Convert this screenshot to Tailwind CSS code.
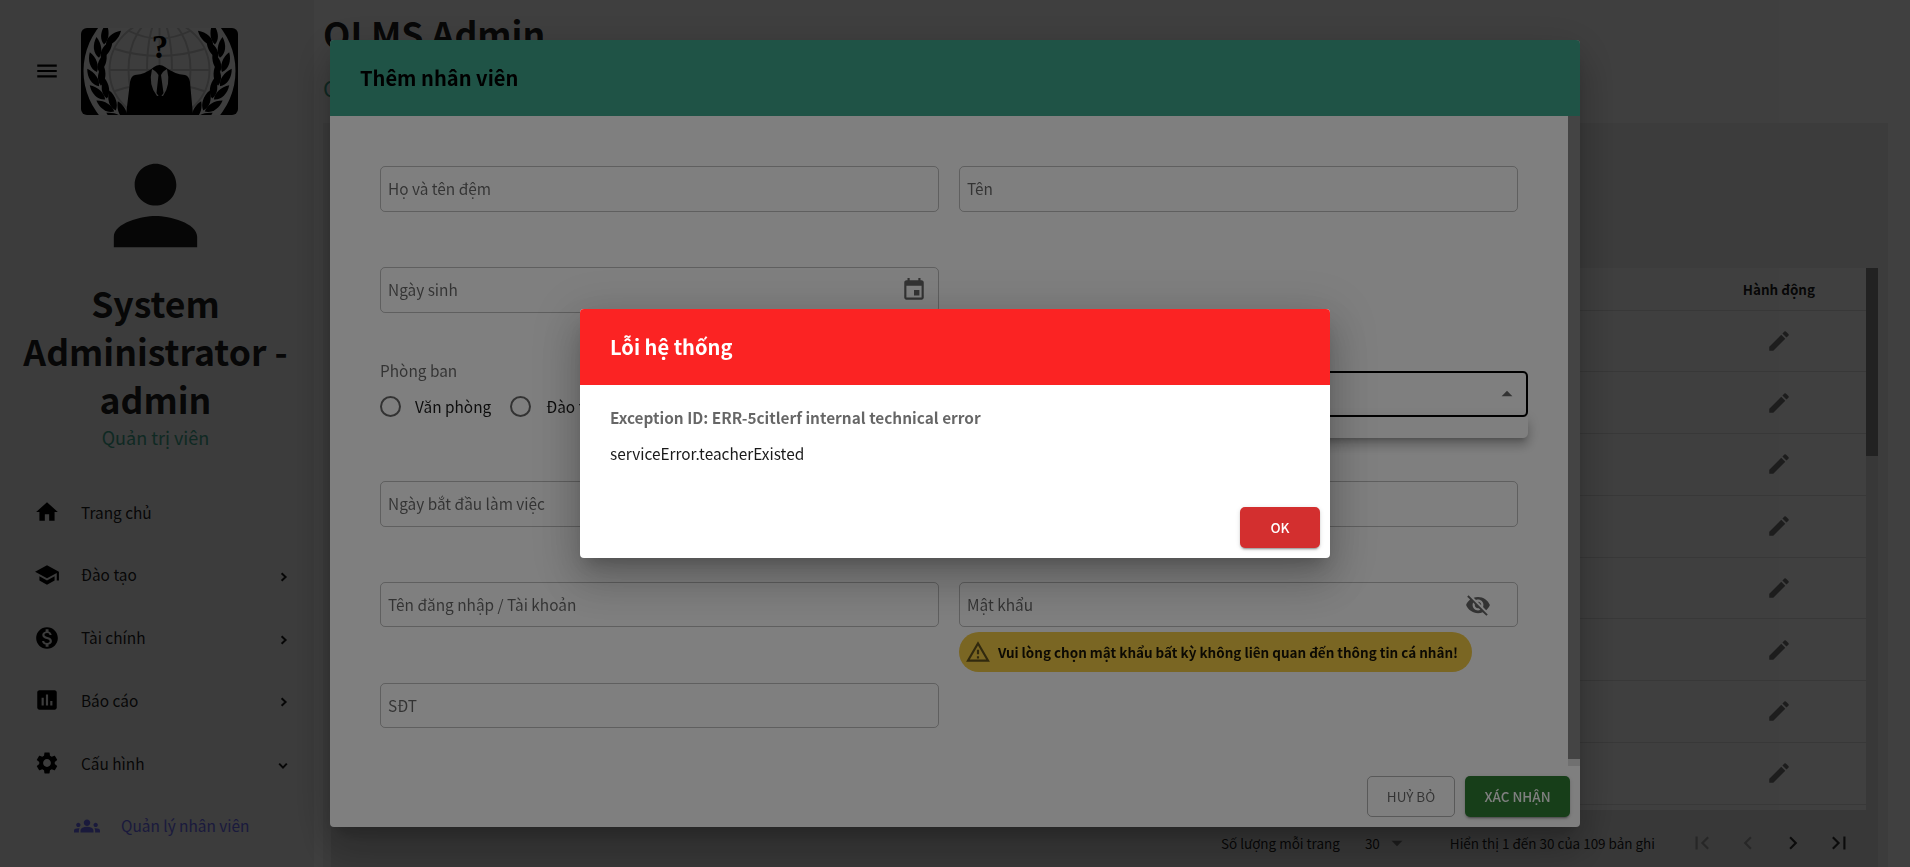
<!DOCTYPE html>
<html lang="vi">
<head>
<meta charset="utf-8">
<title>QLMS Admin</title>
<script src="https://cdn.jsdelivr.net/npm/@tailwindcss/browser@4"></script>
</head>
<body class="h-screen overflow-hidden bg-white font-['Noto_Sans_CJK_JP','Noto_Sans',sans-serif] text-[15.400px] text-black/90">
<svg class="hidden">
  <symbol id="edit" viewBox="0 0 24 24"><path d="M3 17.25V21h3.75L17.81 9.94l-3.75-3.75L3 17.25zM20.71 7.04c.39-.39.39-1.02 0-1.41l-2.34-2.34a.9959.9959 0 0 0-1.41 0l-1.83 1.83 3.75 3.75 1.83-1.83z"/></symbol>
  <symbol id="chev" viewBox="0 0 8 10"><path d="M1.6 1.2 5.6 5 1.6 8.8" fill="none" stroke="currentColor" stroke-width="2"/></symbol>
</svg>

<div class="flex h-full">
  <!-- Sidebar -->
  <aside class="flex h-full w-[314px] shrink-0 flex-col bg-[#f0f0f0]">
    <div class="flex h-[143px] items-center pl-[34px]">
      <svg class="mb-px size-[26px]" viewBox="0 0 24 24"><path d="M3 18h18v-2H3v2zm0-5h18v-2H3v2zm0-7v2h18V6H3z"/></svg>
      <svg class="ml-[21px] h-[87px] w-[157px] rounded-md" viewBox="0 0 157 87">
        <defs>
          <path id="leaf" d="M0 0C-5.500-5-5-14 0-21C4.500-14 4.500-5 0 0z"/>
          <g id="wreath">
            <g transform="translate(45 93) rotate(-45)"><use href="#leaf" transform="translate(-1) rotate(-20)"/><use href="#leaf" transform="translate(1) rotate(20)"/></g>
            <g transform="translate(34 83) rotate(-38)"><use href="#leaf" transform="translate(-1) rotate(-20)"/><use href="#leaf" transform="translate(1) rotate(20)"/></g>
            <g transform="translate(25 71) rotate(-27)"><use href="#leaf" transform="translate(-1) rotate(-20)"/><use href="#leaf" transform="translate(1) rotate(20)"/></g>
            <g transform="translate(19 58) rotate(-14)"><use href="#leaf" transform="translate(-1) rotate(-20)"/><use href="#leaf" transform="translate(1) rotate(20)"/></g>
            <g transform="translate(17 44) rotate(0)"><use href="#leaf" transform="translate(-1) rotate(-20)"/><use href="#leaf" transform="translate(1) rotate(20)"/></g>
            <g transform="translate(19 30) rotate(13)"><use href="#leaf" transform="translate(-1) rotate(-20)"/><use href="#leaf" transform="translate(1) rotate(20)"/></g>
            <g transform="translate(24 17) rotate(26)"><use href="#leaf" transform="translate(-1) rotate(-20)"/><use href="#leaf" transform="translate(1) rotate(20)"/></g>
          </g>
        </defs>
        <rect width="157" height="87" fill="#000"/>
        <ellipse cx="78.500" cy="43" rx="76" ry="73" fill="#fafafa"/>
        <circle cx="78.500" cy="42" r="50" fill="#f4f4f4"/>
        <g fill="none" stroke="#c8c8c8" stroke-width="1.900">
          <circle cx="78.500" cy="42" r="50"/><ellipse cx="78.500" cy="42" rx="31" ry="52"/><ellipse cx="78.500" cy="42" rx="12.500" ry="52"/>
          <path d="M28 42H129M78.500 0V42M34 21Q78 35 123 21M34 63Q78 48 123 63M48 3Q78 18 109 3"/>
        </g>
        <use href="#wreath"/>
        <use href="#wreath" transform="translate(157 0) scale(-1 1)"/>
        <path d="M45 87L49 54Q50 48 54 47Q65 46 73 39H84Q93 46 104 47Q108 48 109 54L112 87z"/>
        <path d="M71 41L78.500 46L86 41Q90 57 82 68H76Q67 57 71 41z" fill="#e4e4e4"/>
        <path d="M73 39Q78.500 35 84 39L83 42H74z"/>
        <path d="M74.500 43H82.500L80 47L82.500 65L79 70L75.500 65L77.500 47z"/>
        <text x="79" y="30" text-anchor="middle" font-family="Liberation Serif" font-weight="bold" font-size="33">?</text>
      </svg>
    </div>
    <div class="flex flex-col items-center pr-[3px]">
      <svg class="size-[125px] text-[#1a1a1a]" fill="currentColor" viewBox="0 0 24 24"><path d="M12 12c2.210 0 4-1.790 4-4s-1.790-4-4-4-4 1.790-4 4 1.790 4 4 4zm0 2c-2.670 0-8 1.340-8 4v2h16v-2c0-2.660-5.330-4-8-4z"/></svg>
      <h2 class="mt-[11px] px-4 text-center text-[35.600px] leading-[48px] font-bold text-black/90">System Administrator - admin</h2>
      <p class="mt-px text-[18px] leading-[26px] text-[#3ea68c]">Quản trị viên</p>
    </div>
    <nav class="mt-[31px] flex flex-col">
      <div class="flex h-[62.700px] items-center pl-[34px]"><svg class="size-[26px]" viewBox="0 0 24 24"><path d="M10 20v-6h4v6h5v-8h3L12 3 2 12h3v8z"/></svg><span class="ml-[21px]">Trang chủ</span></div>
      <div class="flex h-[62.700px] items-center pr-[26px] pl-[34px]"><svg class="size-[26px]" viewBox="0 0 24 24"><path d="M5 13.180v4L12 21l7-3.820v-4L12 17l-7-3.820zM12 3 1 9l11 6 9-4.910V17h2V9L12 3z"/></svg><span class="ml-[21px] flex-1">Đào tạo</span><svg class="mt-[4px] h-[10px] w-[8px]"><use href="#chev"/></svg></div>
      <div class="flex h-[62.700px] items-center pr-[26px] pl-[34px]"><svg class="size-[26px]" viewBox="0 0 24 24"><path d="M12 2C6.480 2 2 6.480 2 12s4.480 10 10 10 10-4.480 10-10S17.520 2 12 2zm1.410 16.090V20h-2.670v-1.930c-1.710-.360-3.160-1.460-3.270-3.400h1.960c.1 1.050.820 1.870 2.650 1.870 1.960 0 2.400-.980 2.400-1.590 0-.830-.440-1.610-2.670-2.140-2.480-.6-4.180-1.620-4.180-3.670 0-1.720 1.390-2.840 3.110-3.210V4h2.670v1.950c1.860.450 2.790 1.860 2.850 3.390H14.300c-.050-1.110-.640-1.870-2.220-1.870-1.500 0-2.400.680-2.400 1.640 0 .840.650 1.390 2.670 1.910s4.180 1.390 4.180 3.910c-.010 1.830-1.380 2.830-3.120 3.160z"/></svg><span class="ml-[21px] flex-1">Tài chính</span><svg class="mt-[4px] h-[10px] w-[8px]"><use href="#chev"/></svg></div>
      <div class="flex h-[62.700px] items-center pr-[26px] pl-[34px]"><svg class="size-[26px]" viewBox="0 0 24 24"><path d="M19 3H5c-1.100 0-2 .9-2 2v14c0 1.100.9 2 2 2h14c1.100 0 2-.9 2-2V5c0-1.100-.9-2-2-2zM9 17H7v-7h2v7zm4 0h-2V7h2v10zm4 0h-2v-4h2v4z"/></svg><span class="ml-[21px] flex-1">Báo cáo</span><svg class="mt-[4px] h-[10px] w-[8px]"><use href="#chev"/></svg></div>
      <div class="flex h-[62.700px] items-center pr-[27px] pl-[34px]"><svg class="size-[26px]" viewBox="0 0 24 24"><path d="M19.140 12.940c.040-.3.060-.610.060-.940 0-.320-.020-.640-.070-.940l2.030-1.580c.180-.140.230-.410.120-.610l-1.920-3.320c-.120-.220-.370-.290-.590-.220l-2.390.960c-.5-.380-1.030-.7-1.620-.940l-.360-2.540c-.040-.240-.240-.410-.480-.410h-3.840c-.240 0-.430.170-.470.410l-.360 2.540c-.590.240-1.130.570-1.620.940l-2.390-.960c-.220-.080-.470 0-.590.220L2.740 8.870c-.120.210-.080.470.120.610l2.030 1.580c-.050.3-.090.630-.090.940s.020.640.070.940l-2.030 1.580c-.180.140-.230.410-.120.610l1.920 3.320c.120.220.370.290.590.220l2.390-.960c.5.380 1.030.7 1.620.940l.360 2.540c.050.240.240.410.480.410h3.840c.240 0 .440-.170.470-.410l.360-2.540c.590-.240 1.130-.560 1.620-.940l2.390.960c.220.080.470 0 .590-.220l1.920-3.320c.120-.220.070-.470-.120-.610l-2.010-1.580zM12 15.600c-1.980 0-3.600-1.620-3.600-3.600s1.620-3.600 3.600-3.600 3.600 1.620 3.600 3.600-1.620 3.600-3.600 3.600z"/></svg><span class="ml-[21px] flex-1">Cấu hình</span><svg class="mt-[6px] h-[10px] w-[8px] rotate-90"><use href="#chev"/></svg></div>
      <div class="flex h-[62.700px] items-center pl-[74px] text-[#6a6af0]"><svg class="size-[26px]" fill="currentColor" viewBox="0 0 24 24"><path d="M12 12.750c1.630 0 3.070.390 4.240.9 1.080.480 1.760 1.560 1.760 2.730V18H6v-1.610c0-1.180.680-2.260 1.760-2.730 1.170-.520 2.610-.910 4.240-.910zM4 13c1.100 0 2-.9 2-2s-.9-2-2-2-2 .9-2 2 .9 2 2 2zm1.130 1.100c-.370-.060-.740-.1-1.130-.1-.990 0-1.930.210-2.780.580C.480 14.900 0 15.620 0 16.430V18h4.500v-1.610c0-.830.230-1.610.630-2.290zM20 13c1.100 0 2-.9 2-2s-.9-2-2-2-2 .9-2 2 .9 2 2 2zm4 3.430c0-.810-.480-1.530-1.220-1.850-.850-.370-1.790-.580-2.780-.580-.390 0-.760.040-1.130.1.4.680.630 1.460.630 2.290V18H24v-1.570zM12 6c1.660 0 3 1.340 3 3s-1.340 3-3 3-3-1.340-3-3 1.340-3 3-3z"/></svg><span class="ml-[21px]">Quản lý nhân viên</span></div>
    </nav>
  </aside>

  <!-- Main page -->
  <main class="flex min-w-0 flex-1 flex-col pr-[22px] pl-[9px]">
    <header class="h-[123px] shrink-0">
      <h1 class="pt-[9px] text-[35.600px] leading-[48px] font-bold text-black/90">QLMS Admin</h1>
      <p class="pt-[13px] text-[22px] leading-[34px] text-[#3ea68c]">Quản lý nhân viên</p>
    </header>
    <section class="flex flex-1 flex-col bg-[#f0f0f0] pt-[145px] pr-[10px] pl-[8px]">
      <div class="flex h-[542px] shrink-0 bg-white">
        <div class="flex flex-1 flex-col">
          <div class="flex h-[42.500px] items-center justify-end border-b border-[#e0e0e0] pr-[51px] text-[13.475px] font-bold text-black/90">Hành động</div>
          <div class="flex h-[61.780px] items-center justify-end border-b border-[#e0e0e0] pr-[74px] text-[#757575]"><svg class="size-[26px]" fill="currentColor"><use href="#edit"/></svg></div>
          <div class="flex h-[61.780px] items-center justify-end border-b border-[#e0e0e0] pr-[74px] text-[#757575]"><svg class="size-[26px]" fill="currentColor"><use href="#edit"/></svg></div>
          <div class="flex h-[61.780px] items-center justify-end border-b border-[#e0e0e0] pr-[74px] text-[#757575]"><svg class="size-[26px]" fill="currentColor"><use href="#edit"/></svg></div>
          <div class="flex h-[61.780px] items-center justify-end border-b border-[#e0e0e0] pr-[74px] text-[#757575]"><svg class="size-[26px]" fill="currentColor"><use href="#edit"/></svg></div>
          <div class="flex h-[61.780px] items-center justify-end border-b border-[#e0e0e0] pr-[74px] text-[#757575]"><svg class="size-[26px]" fill="currentColor"><use href="#edit"/></svg></div>
          <div class="flex h-[61.780px] items-center justify-end border-b border-[#e0e0e0] pr-[74px] text-[#757575]"><svg class="size-[26px]" fill="currentColor"><use href="#edit"/></svg></div>
          <div class="flex h-[61.780px] items-center justify-end border-b border-[#e0e0e0] pr-[74px] text-[#757575]"><svg class="size-[26px]" fill="currentColor"><use href="#edit"/></svg></div>
          <div class="flex h-[61.780px] items-center justify-end border-b border-[#e0e0e0] pr-[74px] text-[#757575]"><svg class="size-[26px]" fill="currentColor"><use href="#edit"/></svg></div>
        </div>
        <div class="w-[12px] bg-[#e0e0e0]"><div class="h-[188px] bg-[#888]"></div></div>
      </div>
      <div class="flex flex-1 items-center bg-[#e0e0e0] pt-[9px] pr-[26.500px] text-[13.475px]">
        <div class="flex flex-1 items-center justify-end whitespace-nowrap">
          <span>Số lượng mỗi trang</span>
          <span class="ml-[25px]">30</span>
          <svg class="ml-[4px] size-[26px] text-[#757575]" fill="currentColor" viewBox="0 0 24 24"><path d="M7 10l5 5 5-5z"/></svg>
          <span class="ml-[40px]">Hiển thị 1 đến 30 của 109 bản ghi</span>
        </div>
        <div class="ml-[34px] flex gap-[19.500px] pb-px">
          <svg class="size-[26px] text-black/30" fill="currentColor" viewBox="0 0 24 24"><path d="M18.410 16.590L13.820 12l4.590-4.590L17 6l-6 6 6 6zM6 6h2v12H6z"/></svg>
          <svg class="size-[26px] text-black/30" fill="currentColor" viewBox="0 0 24 24"><path d="M15.410 16.590L10.830 12l4.580-4.590L14 6l-6 6 6 6z"/></svg>
          <svg class="size-[26px] text-black/80" fill="currentColor" viewBox="0 0 24 24"><path d="M8.590 16.590L13.170 12 8.590 7.410 10 6l6 6-6 6z"/></svg>
          <svg class="size-[26px] text-black/80" fill="currentColor" viewBox="0 0 24 24"><path d="M5.590 7.410L10.180 12l-4.590 4.590L7 18l6-6-6-6zM16 6h2v12h-2z"/></svg>
        </div>
      </div>
    </section>
  </main>
</div>

<!-- Employee form dialog -->
<div class="fixed inset-0 flex items-center justify-center bg-black/50">
  <div class="flex h-[787px] w-[1250px] flex-col overflow-hidden rounded bg-white shadow-[0_11px_15px_-7px_rgba(0,0,0,0.2),0_24px_38px_3px_rgba(0,0,0,0.14),0_9px_46px_8px_rgba(0,0,0,0.12)]">
    <h2 class="flex h-[76px] shrink-0 items-center bg-[#3ea68c] px-[30px] text-[20.100px] font-bold text-black">Thêm nhân viên</h2>
    <div class="flex h-[650px] shrink-0">
      <div class="flex-1 pt-[50px] pr-[50px] pl-[50px] text-black/60">
        <div class="grid grid-cols-2 gap-x-[20px]">
          <div class="flex h-[46px] items-center rounded-[5px] border border-black/25 px-[7px]">Họ và tên đệm</div>
          <div class="flex h-[46px] items-center rounded-[5px] border border-black/25 px-[7px]">Tên</div>
          <div class="mt-[55px] flex h-[46px] items-center justify-between rounded-[5px] border border-black/25 pr-[11px] pl-[7px]">Ngày sinh
            <svg class="size-[26px]" fill="currentColor" viewBox="0 0 24 24"><path d="M17 12h-5v5h5v-5zM16 1v2H8V1H6v2H5c-1.110 0-1.990.9-1.990 2L3 19c0 1.100.890 2 2 2h14c1.100 0 2-.9 2-2V5c0-1.100-.9-2-2-2h-1V1h-2zm3 18H5V8h14v11z"/></svg></div>
          <div></div>
          <div class="mt-[44px] h-[124px]">
            <p class="leading-[26px]">Phòng ban</p>
            <div class="mt-[11px] flex items-center text-black/90">
              <span class="size-[21px] rounded-full border-2 border-black/60"></span><span class="ml-[14px] leading-[25px]">Văn phòng</span>
              <span class="ml-[19px] size-[21px] rounded-full border-2 border-black/60"></span><span class="ml-[15px] leading-[25px]">Đào tạo</span>
            </div>
          </div>
          <div class="mt-[58px] -mr-[10px] ml-[10px]">
            <div class="flex h-[46px] items-center justify-end rounded-[5px] border-2 border-black pr-[6px]"><svg class="size-[26px]" fill="currentColor" viewBox="0 0 24 24"><path d="M7 14l5-5 5 5z"/></svg></div>
            <div class="h-[21px] rounded-b-[5px] bg-white shadow-[0_5px_5px_-3px_rgba(0,0,0,0.2),0_8px_10px_1px_rgba(0,0,0,0.14),0_3px_14px_2px_rgba(0,0,0,0.12)]"></div>
          </div>
          <div class="flex h-[46px] items-center rounded-[5px] border border-black/25 px-[7px]">Ngày bắt đầu làm việc</div>
          <div class="h-[46px] rounded-[5px] border border-black/25"></div>
          <div class="mt-[55px] flex h-[45px] items-center rounded-[5px] border border-black/25 px-[7px]">Tên đăng nhập / Tài khoản</div>
          <div class="mt-[55px] h-[101px]">
            <div class="flex h-[45px] items-center justify-between rounded-[5px] border border-black/25 pr-[26px] pl-[7px]">Mật khẩu
              <svg class="size-[26px]" fill="currentColor" viewBox="0 0 24 24"><path d="M12 7c2.760 0 5 2.240 5 5 0 .650-.130 1.260-.360 1.830l2.920 2.920c1.510-1.260 2.700-2.890 3.430-4.750-1.730-4.390-6-7.500-11-7.500-1.400 0-2.740.250-3.980.7l2.160 2.160C10.740 7.130 11.350 7 12 7zM2 4.270l2.280 2.280.460.460C3.080 8.300 1.780 10.020 1 12c1.730 4.390 6 7.500 11 7.500 1.550 0 3.030-.3 4.380-.840l.420.420L19.730 22 21 20.730 3.270 3 2 4.270zM7.530 9.800l1.550 1.550c-.050.210-.080.430-.080.650 0 1.660 1.340 3 3 3 .220 0 .440-.030.650-.080l1.550 1.550c-.670.330-1.410.530-2.200.530-2.760 0-5-2.240-5-5 0-.790.200-1.530.530-2.200zm4.310-.780l3.150 3.150.020-.160c0-1.660-1.340-3-3-3l-.170.010z"/></svg></div>
            <div class="mt-[5px] flex h-[40px] w-[513px] items-center rounded-full bg-[#f4cc46] pl-[6px] text-[13.475px] font-bold whitespace-nowrap text-black/90">
              <svg class="size-[26px] shrink-0 text-black/60" fill="currentColor" viewBox="0 0 24 24"><path d="M12 5.990L19.530 19H4.470L12 5.990M12 2L1 21h22L12 2zm1 14h-2v2h2v-2zm0-6h-2v4h2v-4z"/></svg>
              <span class="ml-[7px]">Vui lòng chọn mật khẩu bất kỳ không liên quan đến thông tin cá nhân!</span></div>
          </div>
          <div class="flex h-[45px] items-center rounded-[5px] border border-black/25 px-[7px]">SĐT</div>
        </div>
      </div>
      <div class="w-[12px] bg-[#e0e0e0]"><div class="h-[643px] bg-[#888]"></div></div>
    </div>
    <div class="flex flex-1 items-center justify-end gap-[10px] pr-[10px] text-[13.475px] leading-none">
      <button class="h-[41px] w-[88px] rounded-[5px] border border-black/30 text-black/60">HUỶ BỎ</button>
      <button class="h-[41px] w-[105px] rounded-[5px] bg-[#2e7d32] font-medium text-white shadow-[0_3px_1px_-2px_rgba(0,0,0,0.2),0_2px_2px_0_rgba(0,0,0,0.14),0_1px_5px_0_rgba(0,0,0,0.12)]">XÁC NHẬN</button>
    </div>
  </div>
</div>

<!-- Error dialog -->
<div class="fixed inset-0 flex items-center justify-center bg-black/50">
  <div class="flex h-[249px] w-[750px] flex-col overflow-hidden rounded bg-white shadow-[0_11px_15px_-7px_rgba(0,0,0,0.2),0_24px_38px_3px_rgba(0,0,0,0.14),0_9px_46px_8px_rgba(0,0,0,0.12)]">
    <h2 class="flex h-[76px] shrink-0 items-center bg-[#fb2323] px-[30px] text-[20.100px] font-bold text-white">Lỗi hệ thống</h2>
    <div class="flex-1 px-[30px] pt-[19px] leading-[26px]">
      <p class="font-bold text-black/60">Exception ID: ERR-5citlerf internal technical error</p>
      <p class="mt-[10px] text-black/90">serviceError.teacherExisted</p>
    </div>
    <div class="flex justify-end p-[10px]">
      <button class="h-[41px] w-[80px] rounded-[5px] bg-[#d32f2f] text-[13.475px] leading-none font-medium text-white shadow-[0_3px_1px_-2px_rgba(0,0,0,0.2),0_2px_2px_0_rgba(0,0,0,0.14),0_1px_5px_0_rgba(0,0,0,0.12)]">OK</button>
    </div>
  </div>
</div>
</body>
</html>
